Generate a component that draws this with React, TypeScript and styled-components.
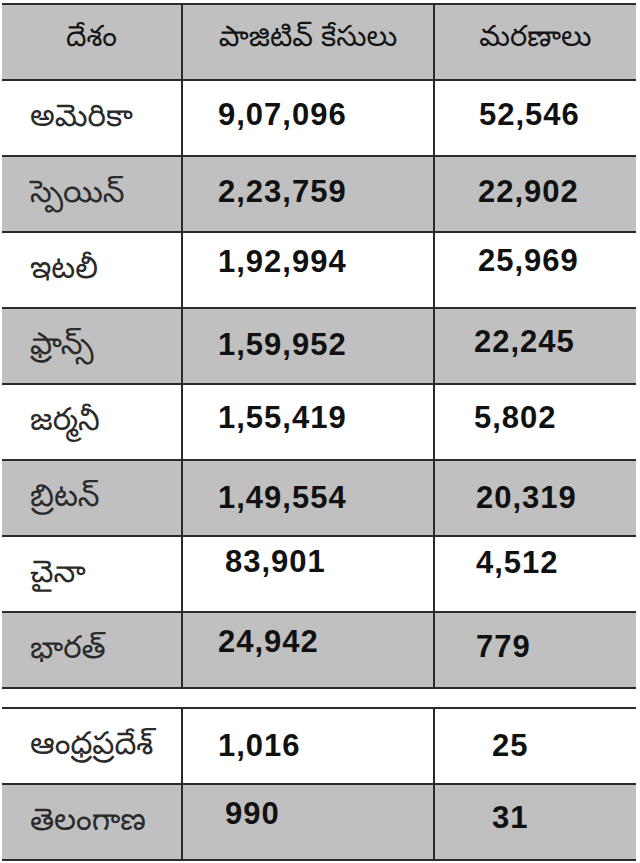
import React from 'react';
import styled, {createGlobalStyle} from 'styled-components';

const GlobalStyle = createGlobalStyle`
  html, body {
    margin: 0;
    padding: 0;
    background: #fff;
  }
`

const TELUGU = `"Noto Sans Telugu", "Lohit Telugu", "Gautami", "Pothana2000", "Noto Sans", "DejaVu Sans", sans-serif`
const GRAY = '#c0c0c0'
const LINE = '#2b2b2b'

const Sheet = styled.div`
  margin: 3px 4px 0 2px;
  width: 634px;
`

const Section = styled.div`
  border-top: 2px solid ${LINE};
`

const Spacer = styled.div`
  height: 18px;
`

const Row = styled.div<{ $shade?: boolean }>`
  display: grid;
  grid-template-columns: 179px 252px 203px;
  height: 74px;
  border-bottom: 2px solid ${LINE};
  background: ${p => (p.$shade ? GRAY : '#fff')};
`

const Cell = styled.div`
  display: flex;
  align-items: center;
  & + & {
    border-left: 2px solid ${LINE};
  }
`

const HeadCell = styled(Cell)`
  justify-content: center;
  font-family: ${TELUGU};
  font-size: 29px;
  color: #141414;
  padding-bottom: 4px;
`

const Name = styled(Cell)`
  padding-left: 28px;
  padding-top: 4px;
  font-family: ${TELUGU};
  font-size: 31px;
  color: #2a2a2a;
`

const Num = styled(Cell)<{ $x: number; $y: number }>`
  padding-left: ${p => p.$x}px;
  padding-bottom: ${p => p.$y * 2}px;
  font-family: "Liberation Sans", Arial, sans-serif;
  font-weight: bold;
  font-size: 31px;
  letter-spacing: 1px;
  color: #111;
`

type Line = {
  name: string
  cases: string
  deaths: string
  cx: number
  cy: number
  dx: number
  dy: number
}

const countries: Line[] = [
  {name: 'అమెరికా', cases: '9,07,096', deaths: '52,546', cx: 35, cy: 3, dx: 44, dy: 3},
  {name: 'స్పెయిన్', cases: '2,23,759', deaths: '22,902', cx: 35, cy: 2, dx: 43, dy: 2},
  {name: 'ఇటలీ', cases: '1,92,994', deaths: '25,969', cx: 35, cy: 8, dx: 43, dy: 9},
  {name: 'ఫ్రాన్స్', cases: '1,59,952', deaths: '22,245', cx: 35, cy: 1, dx: 39, dy: 4},
  {name: 'జర్మనీ', cases: '1,55,419', deaths: '5,802', cx: 35, cy: 4, dx: 39, dy: 4},
  {name: 'బ్రిటన్', cases: '1,49,554', deaths: '20,319', cx: 35, cy: 0, dx: 41, dy: 0},
  {name: 'చైనా', cases: '83,901', deaths: '4,512', cx: 42, cy: 12, dx: 41, dy: 11},
  {name: 'భారత్', cases: '24,942', deaths: '779', cx: 35, cy: 8, dx: 41, dy: 3},
]

const states: Line[] = [
  {name: 'ఆంధ్రప్రదేశ్', cases: '1,016', deaths: '25', cx: 35, cy: 0, dx: 57, dy: 0},
  {name: 'తెలంగాణ', cases: '990', deaths: '31', cx: 42, cy: 8, dx: 57, dy: 4},
]

function TableRow({line, shade}: { line: Line; shade: boolean }) {
  return (
    <Row $shade={shade}>
      <Name>{line.name}</Name>
      <Num $x={line.cx} $y={line.cy}>{line.cases}</Num>
      <Num $x={line.dx} $y={line.dy}>{line.deaths}</Num>
    </Row>
  )
}

export default function App() {
  return (
    <>
      <GlobalStyle/>
      <Sheet>
        <Section>
          <Row $shade>
            <HeadCell>దేశం</HeadCell>
            <HeadCell>పాజిటివ్ కేసులు</HeadCell>
            <HeadCell>మరణాలు</HeadCell>
          </Row>
          {countries.map((line, i) => (
            <TableRow key={line.name} line={line} shade={i % 2 === 1}/>
          ))}
        </Section>
        <Spacer/>
        <Section>
          {states.map((line, i) => (
            <TableRow key={line.name} line={line} shade={i % 2 === 1}/>
          ))}
        </Section>
      </Sheet>
    </>
  )
}
